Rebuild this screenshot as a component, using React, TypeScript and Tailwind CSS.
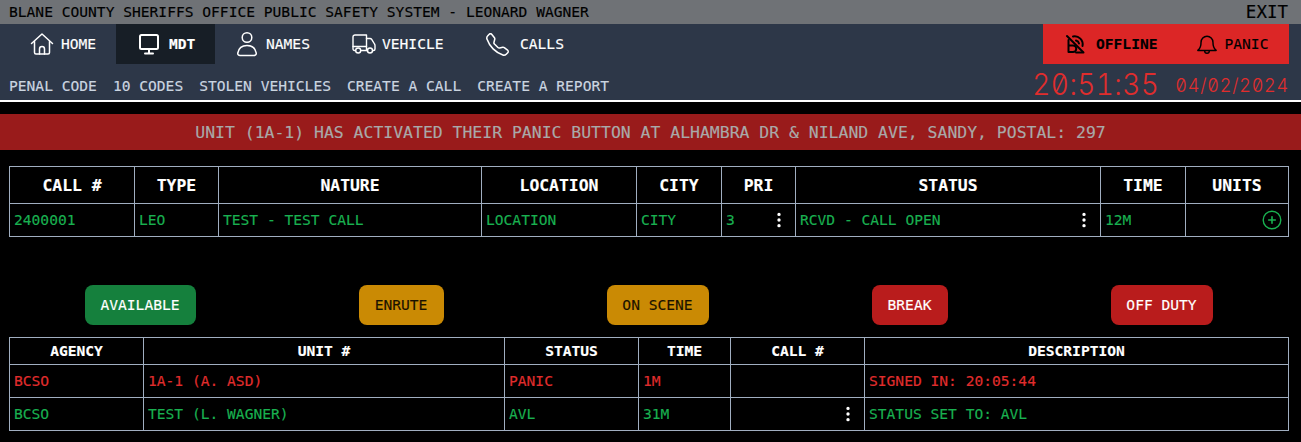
import React from "react";
import { BsTelephone, BsThreeDotsVertical } from "react-icons/bs";

const mono = "font-['DejaVu_Sans_Mono',monospace]";
const stroke = {
  fill: "none",
  stroke: "currentColor",
  strokeLinecap: "round" as const,
  strokeLinejoin: "round" as const,
};

function Dots() {
  return <BsThreeDotsVertical className="text-white" size={18} />;
}

function HomeIcon() {
  return (
    <svg width="24" height="24" viewBox="0 0 24 24" strokeWidth="1.5" {...stroke}>
      <path d="M1.5 11.5 12 2l10.5 9.5" />
      <path d="M4.5 9.5v11a1.5 1.5 0 0 0 1.5 1.5h12a1.5 1.5 0 0 0 1.5-1.5v-11" />
      <path d="M9.5 22v-5a2.5 2.5 0 0 1 5 0v5" />
    </svg>
  );
}

function MonitorIcon() {
  return (
    <svg width="22" height="22" viewBox="0 0 22 22" strokeWidth="2" {...stroke}>
      <rect x="2" y="2" width="18" height="14" rx="1.5" />
      <path d="M11 16v4" />
      <path d="M7 20.500h8" />
    </svg>
  );
}

function PersonIcon() {
  return (
    <svg width="24" height="26" viewBox="0 0 24 26" strokeWidth="1.5" {...stroke}>
      <circle cx="12" cy="6.500" r="4.800" />
      <path d="M5 24.500c-1.500 0-2.500-1-2.200-2.500C3.600 17.500 7 14.500 12 14.500s8.400 3 9.200 7.500c.3 1.500-.7 2.500-2.200 2.500z" />
    </svg>
  );
}

function TruckIcon() {
  return (
    <svg width="24" height="20" viewBox="0 0 24 20" strokeWidth="1.400" {...stroke}>
      <path d="M3.500 16.500h-1A1.500 1.500 0 0 1 1 15V3a2 2 0 0 1 2-2h11.500v15.500H9" />
      <path d="M1 12.500h13.500" />
      <path d="M14.500 4.500h3.500c.7 0 1.300.3 1.700.9l2.800 4.600c.3.400.5.900.5 1.400v3.600a1.500 1.500 0 0 1-1.500 1.500h-.5" />
      <path d="M14.500 16.500h1" />
      <circle cx="6.200" cy="16.500" r="2.500" />
      <circle cx="18" cy="16.500" r="2.500" />
    </svg>
  );
}

function OfflineIcon() {
  return (
    <svg width="20" height="20" viewBox="0 0 20 20" strokeWidth="2" {...stroke} className="ml-[22px]">
      <path d="M2 2l16 16" />
      <path d="M11 18.500h7.500" />
      <path d="M8 2.500A8 8 0 0 1 17.500 12" />
      <path d="M3.500 6v12h4.500a3 3 0 0 0 0-6.500H3.500" />
      <path d="M11 6.500a4 4 0 0 1 3 3" />
    </svg>
  );
}

function BellIcon() {
  return (
    <svg width="22" height="22" viewBox="0 0 24 24" strokeWidth="1.600" {...stroke} className="ml-[38px]">
      <path d="M2 19c2.500-2 3.500-4.500 3.500-9a6.500 6.500 0 0 1 13 0c0 4.500 1 7 3.500 9z" />
      <path d="M9.500 19.500a2.500 2.500 0 0 0 5 0" />
    </svg>
  );
}

function PlusIcon() {
  return (
    <svg width="20" height="20" viewBox="0 0 20 20" strokeWidth="1.400" {...stroke}>
      <circle cx="10" cy="10" r="8.800" />
      <path d="M10 6.700v6.600" strokeWidth="1.600" />
      <path d="M6.700 10h6.600" strokeWidth="1.600" />
    </svg>
  );
}

const nav = [
  { label: "HOME", icon: <HomeIcon />, w: "w-[116px]", g: "gap-[7px]", pl: "pl-[30px]" },
  { label: "MDT", icon: <MonitorIcon />, w: "w-[99px]", g: "gap-[9px]", pl: "pl-[22px]", active: true },
  { label: "NAMES", icon: <PersonIcon />, w: "w-[121px]", g: "gap-[7px]", pl: "pl-[20px]" },
  { label: "VEHICLE", icon: <TruckIcon />, w: "w-[133px]", g: "gap-[6px]", pl: "pl-[16px]" },
  { label: "CALLS", icon: <BsTelephone size={23} />, w: "w-[120px]", g: "gap-[11px]", pl: "pl-[17px]" },
];

const sub = ["PENAL CODE", "10 CODES", "STOLEN VEHICLES", "CREATE A CALL", "CREATE A REPORT"];

const btns = [
  { t: "AVAILABLE", c: "bg-[#15803d] text-white w-[111px]" },
  { t: "ENRUTE", c: "bg-[#ca8a04] text-[#1a1200] w-[85px]" },
  { t: "ON SCENE", c: "bg-[#ca8a04] text-[#1a1200] w-[102px]" },
  { t: "BREAK", c: "bg-[#b91c1c] text-white w-[76px]" },
  { t: "OFF DUTY", c: "bg-[#b91c1c] text-white w-[102px]" },
];

const th = "border border-[#a0aec0] font-bold text-white text-center p-0";
const td = "border border-[#a0aec0] p-0 pl-[4px] text-left font-normal";

export default function App() {
  return (
    <div className={`${mono} w-[1301px] h-[442px] bg-black overflow-hidden text-[14.6px] leading-[20px] [-webkit-text-stroke:0.15px]`}>
      <div className="h-[24px] bg-[#6f7276] flex items-center justify-between pl-[9px] pr-[13px] text-black">
        <span>BLANE COUNTY SHERIFFS OFFICE PUBLIC SAFETY SYSTEM - LEONARD WAGNER</span>
        <span className="text-[17.5px]">EXIT</span>
      </div>

      <div className="h-[78px] bg-[#2d3748] border-b-2 border-white flex justify-between">
        <div className="flex flex-col">
          <div className="flex h-[40px]">
            {nav.map((n) => (
              <div key={n.label} className={`${n.w} ${n.g} ${n.pl} flex items-center text-white ${n.active ? "bg-[#171e26] font-bold" : ""}`}>
                {n.icon}
                <span>{n.label}</span>
              </div>
            ))}
          </div>
          <div className="flex gap-[16px] pl-[9px] pt-[12px] text-[#cbd5e0]">
            {sub.map((s) => (
              <span key={s}>{s}</span>
            ))}
          </div>
        </div>
        <div className="flex flex-col items-end pr-[12px]">
          <div className="w-[246px] h-[40px] bg-[#dc2626] flex items-center text-black">
            <OfflineIcon />
            <span className="ml-[11px] font-bold">OFFLINE</span>
            <BellIcon />
            <span className="ml-[7px]">PANIC</span>
          </div>
          <div className="flex items-end gap-[16px] pt-[6px] font-['Inter',sans-serif] text-[#e02d2d] font-light tabular-nums slashed-zero [-webkit-text-stroke:0px]">
            <span className="text-[28px] leading-[28px] tracking-[0.4px] scale-y-[1.08]">20:51:35</span>
            <span className="text-[18px] leading-[24px] tracking-[0.8px] scale-y-[1.05]">04/02/2024</span>
          </div>
        </div>
      </div>

      <div className="mt-[12px] h-[36px] pt-[2px] bg-[#991b1b] flex items-center justify-center text-[#a9a9a9] text-[16.45px]">
        UNIT (1A-1) HAS ACTIVATED THEIR PANIC BUTTON AT ALHAMBRA DR &amp; NILAND AVE, SANDY, POSTAL: 297
      </div>

      <div className="pl-[9px] pt-[16px]">
        <table className="w-[1279px] table-fixed border-collapse text-[#19b050]">
          <colgroup>
            {[125, 84, 263, 155, 85, 74, 305, 85, 103].map((w, i) => (
              <col key={i} style={{ width: w }} />
            ))}
          </colgroup>
          <thead>
            <tr className="h-[37px] text-[16.4px]">
              {["CALL #", "TYPE", "NATURE", "LOCATION", "CITY", "PRI", "STATUS", "TIME", "UNITS"].map((h) => (
                <th key={h} className={`${th} pt-[2px]`}>{h}</th>
              ))}
            </tr>
          </thead>
          <tbody>
            <tr className="h-[33px]">
              <td className={td}>2400001</td>
              <td className={td}>LEO</td>
              <td className={td}>TEST - TEST CALL</td>
              <td className={td}>LOCATION</td>
              <td className={td}>CITY</td>
              <td className={td}>
                <div className="flex items-center justify-between pr-[7px]">3<Dots /></div>
              </td>
              <td className={td}>
                <div className="flex items-center justify-between pr-[7px]">RCVD - CALL OPEN<Dots /></div>
              </td>
              <td className={td}>12M</td>
              <td className={td}>
                <div className="flex justify-end pr-[6px]"><PlusIcon /></div>
              </td>
            </tr>
          </tbody>
        </table>
      </div>

      <div className="ml-[3px] w-[1291px] mt-[48px] flex justify-around">
        {btns.map((b) => (
          <div key={b.t} className={`${b.c} h-[40px] rounded-lg flex items-center justify-center`}>{b.t}</div>
        ))}
      </div>

      <div className="pl-[9px] pt-[12px]">
        <table className="w-[1279px] table-fixed border-collapse">
          <colgroup>
            {[134, 361, 134, 92, 134, 424].map((w, i) => (
              <col key={i} style={{ width: w }} />
            ))}
          </colgroup>
          <thead>
            <tr className="h-[27px]">
              {["AGENCY", "UNIT #", "STATUS", "TIME", "CALL #", "DESCRIPTION"].map((h) => (
                <th key={h} className={th}>{h}</th>
              ))}
            </tr>
          </thead>
          <tbody>
            <tr className="h-[33px] text-[#e02d2d]">
              <td className={td}>BCSO</td>
              <td className={td}>1A-1 (A. ASD)</td>
              <td className={td}>PANIC</td>
              <td className={td}>1M</td>
              <td className={td}></td>
              <td className={td}>SIGNED IN: 20:05:44</td>
            </tr>
            <tr className="h-[33px] text-[#19b050]">
              <td className={td}>BCSO</td>
              <td className={td}>TEST (L. WAGNER)</td>
              <td className={td}>AVL</td>
              <td className={td}>31M</td>
              <td className={td}>
                <div className="flex justify-end pr-[7px]"><Dots /></div>
              </td>
              <td className={td}>STATUS SET TO: AVL</td>
            </tr>
          </tbody>
        </table>
      </div>
    </div>
  );
}
